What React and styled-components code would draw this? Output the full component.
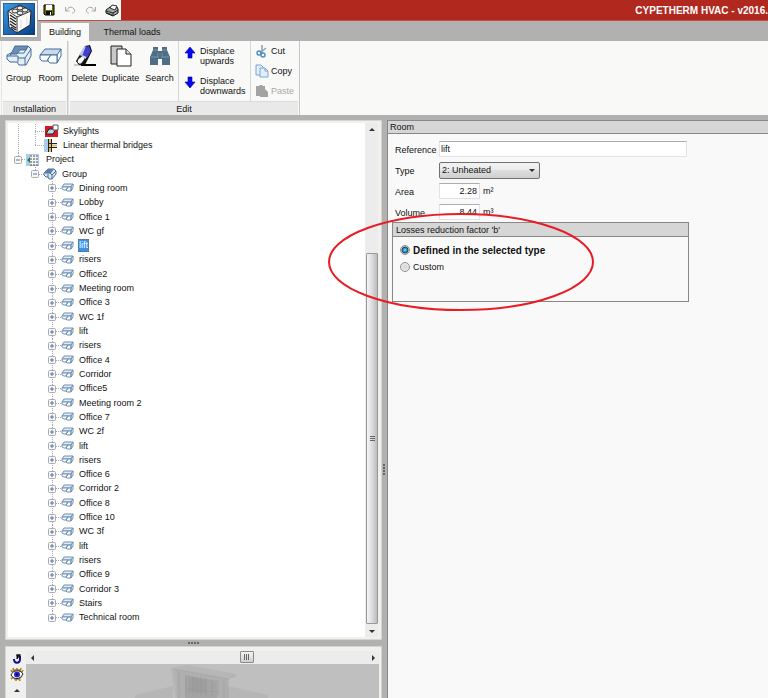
import React from "react";
import styled, { createGlobalStyle, css } from "styled-components";

const GlobalStyle = createGlobalStyle`
  *, *::before, *::after { box-sizing: border-box; }
  body { margin: 0; background: #b1b1b1; }
  body, button, input, select {
    font-family: "Liberation Sans", Arial, sans-serif;
    font-size: 9px;
    color: #111;
  }
  button { border: 0; padding: 0; margin: 0; background: none; }
  svg { display: block; flex: none; }
`;

const Window = styled.div`
  display: flex;
  flex-direction: column;
  height: 100vh;
  overflow: hidden;
`;

const Header = styled.header`
  display: grid;
  grid-template-columns: 38px 1fr;
  grid-template-rows: 21px 20px;
`;

const AppButton = styled.button`
  grid-row: 1 / 3;
  width: 38px;
  height: 38px;
  border: 1px solid #a9a9a9;
  background: #fff;
  display: grid;
  place-items: center;
`;

const TitleBar = styled.div`
  display: flex;
  justify-content: space-between;
  background: #b0281e;
  border-bottom: 1px solid #bb5049;
  overflow: hidden;
`;

const QuickAccess = styled.div`
  display: flex;
  align-items: center;
  gap: 8px;
  padding: 0 3px 0 4px;
  width: 83px;
  background: #f9f9f8;
`;

const QuickButton = styled.button`
  width: 13px;
  height: 14px;
  display: grid;
  place-items: center;
`;

const WindowTitle = styled.h1`
  margin: 0;
  font-size: 10px;
  line-height: 21px;
  color: #fff;
  white-space: nowrap;
`;

const Tabs = styled.nav`
  display: flex;
  padding-left: 3px;
  gap: 10px;
`;

const Tab = styled.button`
  width: ${(p) => (p.$active ? 48 : 66)}px;
  margin-top: 2px;
  background: ${(p) => (p.$active ? "#f9f9f8" : "transparent")};
  line-height: 16px;
  white-space: nowrap;
`;

const Ribbon = styled.div`
  display: flex;
  height: 74px;
  flex: none;
  background: #f9f9f8;
  padding-left: 1px;
`;

const RibbonGroup = styled.section`
  display: flex;
  flex-direction: column;
  width: ${(p) => p.$width}px;
  border-right: 1px solid #c8c8c8;
  border-left: 1px solid #e4e4e4;
`;

const GroupBody = styled.div`
  flex: 1;
  display: flex;
`;

const GroupTitle = styled.h2`
  margin: 0 1px;
  height: 14px;
  border-top: 1px solid #dcdcdc;
  background: #e9e9e9;
  font-size: 9px;
  font-weight: normal;
  line-height: 14px;
  text-align: center;
`;

const LargeButton = styled.button`
  width: ${(p) => p.$width}px;
  display: flex;
  flex-direction: column;
  align-items: center;
  padding-top: 3px;
  gap: 4px;
  white-space: nowrap;
  line-height: 12px;
`;

const SmallColumn = styled.div`
  display: flex;
  flex-direction: column;
  border-left: 1px solid #d6d6d6;
  width: ${(p) => p.$width}px;
  padding: ${(p) => (p.$tall ? "5px 0 0 5px" : "0 0 0 4px")};
  gap: ${(p) => (p.$tall ? 10 : 0)}px;
`;

const SmallButton = styled.button`
  display: flex;
  align-items: ${(p) => (p.$tall ? "flex-start" : "center")};
  gap: ${(p) => (p.$tall ? 4 : 2)}px;
  height: 20px;
  line-height: 10px;
  text-align: left;
  color: #111;
  white-space: nowrap;
  &:disabled { color: #aaa; }
`;

const Workspace = styled.main`
  flex: 1;
  min-height: 0;
  display: grid;
  grid-template-columns: minmax(0, 377fr) 5px minmax(0, 381fr);
  padding: 5px 0 0 5px;
`;

const LeftSide = styled.div`
  display: flex;
  flex-direction: column;
  min-height: 0;
`;

const Panel = styled.section`
  display: flex;
  background: #f0f0f0;
  border: 1px solid #d8d4c8;
  min-height: 0;
`;

const TreePanel = styled(Panel)`
  flex: 1;
  padding: 2px 3px 2px 2px;
`;

const Tree = styled.ul`
  flex: 1;
  display: flex;
  flex-direction: column;
  margin: 0;
  padding: 1px 0 12px 0;
  list-style: none;
  background: #fff;
  min-height: 0;
`;

const guides = {
  outer: css`
    background-image: repeating-linear-gradient(to bottom, #aaa 0 1px, transparent 1px 2px),
      repeating-linear-gradient(to bottom, #aaa 0 1px, transparent 1px 2px),
      repeating-linear-gradient(to right, #aaa 0 1px, transparent 1px 2px);
    background-size: 1px 100%, 1px ${(p) => (p.$last ? "50%" : "100%")}, 9px 1px;
    background-position: 10px 0, 27px 0, 27px 50%;
    background-repeat: no-repeat;
  `,
  root: css`
    background-image: repeating-linear-gradient(to bottom, #aaa 0 1px, transparent 1px 2px),
      repeating-linear-gradient(to right, #aaa 0 1px, transparent 1px 2px);
    background-size: 1px 50%, 9px 1px;
    background-position: 10px 0, 10px 50%;
    background-repeat: no-repeat;
  `,
  group: css`
    background-image: repeating-linear-gradient(to bottom, #aaa 0 1px, transparent 1px 2px),
      repeating-linear-gradient(to right, #aaa 0 1px, transparent 1px 2px);
    background-size: 1px 50%, 9px 1px;
    background-position: 27px 0, 27px 50%;
    background-repeat: no-repeat;
  `,
  room: css`
    background-image: repeating-linear-gradient(to bottom, #aaa 0 1px, transparent 1px 2px),
      repeating-linear-gradient(to right, #aaa 0 1px, transparent 1px 2px);
    background-size: 1px ${(p) => (p.$last ? "50%" : "100%")}, 11px 1px;
    background-position: 44px 0, 44px 50%;
    background-repeat: no-repeat;
  `,
};

const indents = { outer: 36, root: 6, group: 23, room: 40 };

const TreeRow = styled.li`
  flex: 1 1 0;
  min-height: 0;
  display: flex;
  align-items: center;
  padding-left: ${(p) => indents[p.$level]}px;
  ${(p) => guides[p.$level]}
`;

const Expander = styled.button`
  width: 8px;
  height: 8px;
  margin-right: ${(p) => (p.$wide ? 5 : 4)}px;
`;

const NodeLabel = styled.span`
  margin-left: ${(p) => p.$gap}px;
  line-height: 13px;
  white-space: nowrap;
  ${(p) =>
    p.$selected &&
    css`
      background: #3195f5;
      color: #fff;
      outline: 1px dotted #9a5a1a;
      outline-offset: -1px;
      padding: 0 1px;
      margin-left: ${p.$gap - 1}px;
    `}
`;

const VScroll = styled.div`
  width: 13px;
  display: flex;
  flex-direction: column;
  align-items: center;
  background: #ececec;
`;

const ScrollArrow = styled.button`
  width: 13px;
  height: 13px;
  flex: none;
  display: grid;
  place-items: center;
`;

const VTrack = styled.div`
  flex: 1;
  width: 12px;
  display: flex;
  align-items: flex-end;
`;

const VThumb = styled.div`
  width: 12px;
  height: 76%;
  border: 1px solid #999;
  border-radius: 1px;
  background: linear-gradient(to right, #f4f4f4, #dcdcdc 50%, #b9bbbf);
  display: grid;
  place-items: center;
`;

const HSplitter = styled.div`
  height: 6px;
  display: grid;
  place-items: center;
`;

const VSplitter = styled.div`
  display: grid;
  place-items: center;
  padding-top: 122px;
`;

const ViewPanel = styled(Panel)`
  height: 52px;
  border-bottom: 0;
  padding: 4px 2px 0;
`;

const ViewTools = styled.div`
  width: 18px;
  display: flex;
  flex-direction: column;
  align-items: center;
  gap: 3px;
  padding-top: 1px;
`;

const ToolButton = styled.button`
  height: 13px;
  display: grid;
  place-items: center;
`;

const ViewArea = styled.div`
  flex: 1;
  min-width: 0;
  display: flex;
  flex-direction: column;
`;

const HScroll = styled.div`
  height: 13px;
  display: flex;
  background: #ececec;
`;

const HTrack = styled.div`
  flex: 1;
  display: flex;
  padding-left: 57%;
`;

const HThumb = styled.div`
  width: 14px;
  height: 12px;
  border: 1px solid #8b8b8b;
  border-radius: 1px;
  background: linear-gradient(#f4f4f4, #cfcfcf);
  display: grid;
  place-items: center;
`;

const Viewport = styled.div`
  flex: 1;
  background: #bfbfbf;
  display: flex;
  justify-content: center;
  overflow: hidden;
`;

const RoomPanel = styled.section`
  border-left: 1px solid #888;
  background: #f9f9f9;
`;

const PanelHeading = styled.h2`
  margin: 0;
  height: 14px;
  padding-left: 2px;
  border: solid #888;
  border-width: 1px 0;
  background: #d6d6d6;
  font-size: 9px;
  font-weight: normal;
  line-height: 13px;
`;

const RoomForm = styled.form`
  padding: 7px 5px 0 4px;
`;

const Fields = styled.div`
  display: grid;
  grid-template-columns: 44px 1fr;
  row-gap: 5px;
  padding-left: 3px;
  width: 295px;
  max-width: 100%;
`;

const FieldLabel = styled.label`
  line-height: 16px;
  padding-top: 1px;
  height: 16px;
`;

const FieldValue = styled.div`
  display: flex;
  align-items: center;
  gap: 3px;
  height: 16px;
`;

const TextInput = styled.input`
  width: ${(p) => p.$width};
  height: 16px;
  border: 1px solid #e2e3ea;
  border-top-color: #abadb3;
  background: #fff;
  padding: 0 2px 0 1px;
  text-align: ${(p) => p.$align || "left"};
`;

const SelectFrame = styled.div`
  display: flex;
  align-items: center;
  width: 101px;
  height: 17px;
  border: 1px solid #707070;
  border-radius: 2px;
  background: linear-gradient(#f2f2f2, #ebebeb 50%, #dddddd 50%, #cfcfcf);
  padding-right: 3px;
`;

const Select = styled.select`
  appearance: none;
  flex: 1;
  min-width: 0;
  border: 0;
  background: none;
  padding: 0 2px;
`;

const Losses = styled.fieldset`
  position: relative;
  width: 297px;
  max-width: 100%;
  height: 80px;
  margin: 2px 0 0;
  padding: 0;
  border: 1px solid #888;
  min-width: 0;
`;

const LossesTitle = styled.div`
  height: 14px;
  padding-left: 3px;
  border-bottom: 1px solid #888;
  background: #d6d6d6;
  line-height: 14px;
`;

const Options = styled.div`
  display: flex;
  flex-direction: column;
  gap: 5px;
  padding: 7px 0 0 7px;
`;

const Option = styled.label`
  display: flex;
  align-items: center;
  gap: 3px;
  height: 12px;
  font-size: ${(p) => (p.$strong ? 10 : 9)}px;
  font-weight: ${(p) => (p.$strong ? "bold" : "normal")};
`;

const Radio = styled.input`
  appearance: none;
  width: 10px;
  height: 10px;
  margin: 0;
  border: 1px solid #8f8f8f;
  border-radius: 50%;
  background: radial-gradient(circle, #dcdcdc 30%, #f4f4f4);
  &:checked {
    background: radial-gradient(circle, #5cc0e8 0 1px, #12476b 3px, #e8f0f4 4px);
  }
`;

const Highlight = styled.svg`
  position: absolute;
  left: -66px;
  top: -11px;
  z-index: 2;
  pointer-events: none;
`;

const AppLogo = () => (
  <svg width="32" height="32" viewBox="0 0 32 32">
    <defs>
      <linearGradient id="logoBlue" x2="1" y2="1">
        <stop stopColor="#3b9de9" />
        <stop offset="1" stopColor="#073a80" />
      </linearGradient>
    </defs>
    <rect width="32" height="32" fill="url(#logoBlue)" stroke="#123b66" />
    <path d="M5 8L17 2L28 8L27 22L14 30L6 24Z" fill="#fafafa" stroke="#222" />
    <path d="M5 8L14 14L28 8M14 14V30" fill="none" stroke="#333" />
    <path d="M7 12l6 4M7 15l6 4M7 18l6 4M7 21l6 4M8 24l5 3" stroke="#222" strokeWidth="1.4" />
    <ellipse cx="12" cy="8" rx="3" ry="2" fill="#eee" stroke="#333" />
    <ellipse cx="17" cy="5" rx="3" ry="2" fill="#eee" stroke="#333" />
    <ellipse cx="17" cy="10" rx="3" ry="2" fill="#eee" stroke="#333" />
    <ellipse cx="22" cy="7" rx="3" ry="2" fill="#eee" stroke="#333" />
    <path d="M18 17v8M24 14v8" stroke="#ddd" />
  </svg>
);

const SaveIcon = () => (
  <svg width="12" height="12" viewBox="0 0 12 12">
    <path d="M1 1h10v10H2l-1-1z" fill="#6e7308" stroke="#000" />
    <path d="M3 1h6v5H3z" fill="#fff" />
    <path d="M3 7h6v4H3z" fill="#111" />
    <path d="M7 8h1v3H7z" fill="#fff" />
  </svg>
);

const UndoIcon = ({ flip }) => (
  <svg width="12" height="10" viewBox="0 0 12 10">
    <path
      d={flip ? "M10.500 2v4H6.500M10 6C8 2 4 1 2 4S3 8 4 8" : "M1.500 2v4h4M2 6C4 2 8 1 10 4S9 8 8 8"}
      fill="none"
      stroke="#a9a9a9"
    />
  </svg>
);

const PrintIcon = () => (
  <svg width="14" height="13" viewBox="0 0 14 13">
    <path d="M1 6l4-3h7l1 2v4l-5 3-7-3z" fill="#aaa" stroke="#111" />
    <path d="M5 4l2-3 5 1-2 4z" fill="#fff" stroke="#333" />
    <path d="M1 7l7 2 5-3M8 9v3M2 9l5 2" fill="none" stroke="#222" />
    <path d="M3 7h3" stroke="#3a3" />
  </svg>
);

const RoomShape = ({ size = 24 }) => (
  <svg width={size} height={size} viewBox="0 0 24 24">
    <path d="M6 5h16l-3 6H1z" fill="#ccd9e6" stroke="#3e6c9c" />
    <path d="M1 11h11l-3 4v2H3l-2-2zM22 5v7l-4 7v-8z" fill="#fff" stroke="#3e6c9c" />
    <path d="M12 11h6v8h-7l-2-2v-2z" fill="#fff" stroke="#3e6c9c" />
  </svg>
);

const GroupShape = () => (
  <svg width="26" height="24" viewBox="0 0 26 24">
    <path d="M5 9h13l4-7 3 3v7l-5 9h-7l-2-3H4l-3-3v-4z" fill="#e5edf5" stroke="#3e6c9c" />
    <path d="M9 2h13l-2 4h-6l-3 4H5z" fill="#6e8db4" stroke="#3e6c9c" />
    <path d="M1 12h11v6M12 14h7l6-9M19 14v7M5 9l-1 3" fill="none" stroke="#3e6c9c" />
  </svg>
);

const SmallRoom = () => (
  <svg width="13" height="10" viewBox="0 0 13 10">
    <path d="M3 1h9l-2 3H1z" fill="#e2ebf4" stroke="#6d90b4" />
    <path d="M1 4v2l2 1h2l2-3zM7 4h3v4H6L5 7zM12 1v4l-2 3V4z" fill="#fff" stroke="#6d90b4" />
  </svg>
);

const SmallGroup = () => (
  <svg width="14" height="12" viewBox="0 0 14 12">
    <path d="M5 1h6l2 2v3l-4 5H6L5 9H3L1 7V5z" fill="#dbe6f0" stroke="#44709c" />
    <path d="M5 1h6L8 5H2z" fill="#5d7fa6" />
    <path d="M2 5h5l2 2v4M9 7l4-4M5 9V6" fill="none" stroke="#44709c" />
  </svg>
);

const EraserIcon = () => (
  <svg width="24" height="24" viewBox="0 0 24 24">
    <path d="M1 21h9" stroke="#999" />
    <path d="M8 21h15" stroke="#000" strokeWidth="2" />
    <path d="M12 2l5-1 2 6-7 14H6l-3-4z" fill="#111" />
    <path d="M12 3l4-1 2 5-4 7-5-3z" fill="#3f3fd0" />
    <path d="M11 3l2-1-4 10-3-1z" fill="#bbc4e8" />
    <path d="M5 15l4-3 3 3-4 5H6l-2-2z" fill="#fff" stroke="#222" />
    <path d="M9 12l4 2" stroke="#d6dbf4" strokeWidth="2" />
  </svg>
);

const DuplicateIcon = () => (
  <svg width="22" height="24" viewBox="0 0 22 24">
    <path d="M1 2h11v18H1z" fill="#c9c9c9" stroke="#222" />
    <path d="M7 5h9l5 5v12H7z" fill="#fff" stroke="#222" />
    <path d="M16 5v5h5" fill="#ddd" stroke="#222" />
  </svg>
);

const BinocularsIcon = () => (
  <svg width="22" height="24" viewBox="0 0 22 24">
    <path d="M4 3h5v4h4V3h5v3l3 7v8h-8v-6H9v6H1v-8l3-7z" fill="#4e6e88" />
    <path d="M4 6h5M13 6h5M2 13h7M13 13h7M9 9v5M13 9v5" stroke="#7892a6" />
  </svg>
);

const MoveArrow = ({ down }) => (
  <svg width="12" height="13" viewBox="0 0 12 13">
    <path
      d={down ? "M4 1h4v5h3L6 12 1 6h3z" : "M4 12h4V7h3L6 1 1 7h3z"}
      fill="#0808f0"
      stroke="#0000a0"
      strokeWidth="0.6"
    />
  </svg>
);

const CutIcon = () => (
  <svg width="14" height="14" viewBox="0 0 14 14">
    <path d="M7 1v8M11 4L5 9" stroke="#8ca5ba" strokeWidth="1.600" />
    <circle cx="4" cy="9" r="2" fill="none" stroke="#4a8dc4" strokeWidth="1.400" />
    <circle cx="8" cy="11" r="2" fill="none" stroke="#4a8dc4" strokeWidth="1.400" />
  </svg>
);

const CopyIcon = () => (
  <svg width="14" height="14" viewBox="0 0 14 14">
    <path d="M1 1h5l2 2v8H1z" fill="#e4f0fc" stroke="#7ba4d6" />
    <path d="M5 4h5l3 3v6H5z" fill="#e4f0fc" stroke="#7ba4d6" />
    <path d="M10 4v3h3" fill="none" stroke="#7ba4d6" />
  </svg>
);

const PasteIcon = () => (
  <svg width="14" height="14" viewBox="0 0 14 14">
    <path d="M1 2h3l1-1h2l1 1h2v3l3 3v5H5v-1H1z" fill="#a3a3a3" />
  </svg>
);

const ExpandGlyph = ({ open }) => (
  <svg width="8" height="8" viewBox="0 0 8 8">
    <rect x=".5" y=".5" width="7" height="7" rx="1" fill="#f8f8f8" stroke="#aaa" />
    <path d={open ? "M2 4h4" : "M2 4h4M4 2v4"} stroke="#5673a5" />
  </svg>
);

const SkylightIcon = () => (
  <svg width="15" height="14" viewBox="0 0 15 14">
    <path d="M1 2h13v11H1z" fill="#d91822" />
    <path d="M2 10l3-5h7l-3 5z" fill="#b9d5ee" stroke="#222" />
    <path d="M9 1h5v5H9z" fill="#fff" stroke="#555" />
  </svg>
);

const BridgeIcon = () => (
  <svg width="14" height="13" viewBox="0 0 14 13">
    <path d="M0 0h4v13H0z" fill="#a9cbee" />
    <path d="M6 0v13M8 6.500h5" stroke="#d9bb6a" strokeWidth="2" />
    <path d="M4.500 0v13M7.500 0v13M4 4.500h9M4 8.500h9" stroke="#222" />
  </svg>
);

const ProjectIcon = () => (
  <svg width="13" height="12" viewBox="0 0 13 12">
    <path d="M0 0h13v12H0z" fill="#a9cdf2" />
    <path d="M4 1h8v10H4z" fill="#f5f5f5" />
    <path d="M4 2h8M4 5h8M4 8h8M4 11h8" stroke="#444" strokeDasharray="2 1" />
    <path d="M1 6l3-3v6z" fill="#237b4b" />
  </svg>
);

const Triangle = ({ dir }) => {
  const paths = {
    up: "M1 5l3-3 3 3z",
    down: "M1 3h6L4 6z",
    left: "M5 1v6L2 4z",
    right: "M3 1v6l3-3z",
  };
  return (
    <svg width="8" height="8" viewBox="0 0 8 8">
      <path d={paths[dir]} fill="#333" />
    </svg>
  );
};

const ThumbGrip = ({ vertical }) => (
  <svg width="8" height="8" viewBox="0 0 8 8">
    <path d={vertical ? "M2 1.500h5M2 3.500h5M2 5.500h5" : "M1.500 1v6M3.500 1v6M5.500 1v6"} stroke="#666" />
  </svg>
);

const Grip = ({ vertical }) => (
  <svg width={vertical ? 3 : 12} height={vertical ? 12 : 3} viewBox={vertical ? "0 0 3 12" : "0 0 12 3"}>
    <path
      d={vertical ? "M1 0v12" : "M0 1h12"}
      stroke="#666"
      strokeWidth="2"
      strokeDasharray="2 1"
    />
  </svg>
);

const OrbitIcon = () => (
  <svg width="12" height="12" viewBox="0 0 12 12">
    <path d="M3 6c0 5 6 5 6 0V3" fill="none" stroke="#10108a" strokeWidth="2" />
    <path d="M5 2h5M9 2L6 6V2z" fill="#111" stroke="#111" />
  </svg>
);

const EyeIcon = () => (
  <svg width="14" height="13" viewBox="0 0 14 13">
    <path d="M2 4L1 2M4 3L3 0M7 2V0M10 3l1-3M12 4l1-2M3 9l-2 2M6 10v3M9 10l1 3M2 4l3-2h4l3 3M2 8l3 3h4l3-3" fill="none" stroke="#a67c1d" strokeWidth="1.500" />
    <path d="M1 7C3 2 10 1 13 6 10 12 4 12 1 7z" fill="#fff" stroke="#222" />
    <circle cx="7" cy="6.500" r="3" fill="#2525dc" />
    <circle cx="7" cy="6.500" r="1" fill="#000" />
  </svg>
);

const Model = () => (
  <svg width="160" height="34" viewBox="0 0 160 34">
    <path d="M12 31l38-9v12H12zM104 22l41 9v3h-41z" fill="#b4b4b4" opacity=".8" />
    <path d="M48 4l16-3 49 9v2l-8 2v20H52z" fill="#aaa" opacity=".45" />
    <path d="M52 6l54 9v19H54z" fill="#a0a0a0" opacity=".3" />
    <path d="M62 11l32 6v17H62z" fill="#8a8a8a" opacity=".3" />
    <path d="M68 13l15 3v14l-17-2z" fill="#808080" opacity=".15" />
    <path
      d="M50 5l55 10 7-3M56 8v26M63 11v22M66 12v18M70 12v21M74 13v17M78 13v20M83 14v18M89 15v17M95 16v17M101 16v18M62 25l34 3"
      fill="none"
      stroke="#929292"
      opacity=".35"
    />
  </svg>
);

const rooms = [
  "Dining room", "Lobby", "Office 1", "WC gf", "lift", "risers", "Office2",
  "Meeting room", "Office 3", "WC 1f", "lift", "risers", "Office 4", "Corridor",
  "Office5", "Meeting room 2", "Office 7", "WC 2f", "lift", "risers", "Office 6",
  "Corridor 2", "Office 8", "Office 10", "WC 3f", "lift", "risers", "Office 9",
  "Corridor 3", "Stairs", "Technical room",
];

const SELECTED_ROOM = 4;

const RoomTree = () => (
  <Tree aria-label="Building elements">
    <TreeRow $level="outer">
      <SkylightIcon />
      <NodeLabel $gap={4}>Skylights</NodeLabel>
    </TreeRow>
    <TreeRow $level="outer" $last>
      <BridgeIcon />
      <NodeLabel $gap={5}>Linear thermal bridges</NodeLabel>
    </TreeRow>
    <TreeRow $level="root">
      <Expander aria-label="Collapse Project"><ExpandGlyph open /></Expander>
      <ProjectIcon />
      <NodeLabel $gap={7}>Project</NodeLabel>
    </TreeRow>
    <TreeRow $level="group">
      <Expander aria-label="Collapse Group"><ExpandGlyph open /></Expander>
      <SmallGroup />
      <NodeLabel $gap={5}>Group</NodeLabel>
    </TreeRow>
    {rooms.map((name, i) => (
      <TreeRow key={i} $level="room" $last={i === rooms.length - 1}>
        <Expander $wide aria-label={`Expand ${name}`}><ExpandGlyph /></Expander>
        <SmallRoom />
        <NodeLabel $gap={5} $selected={i === SELECTED_ROOM}>{name}</NodeLabel>
      </TreeRow>
    ))}
  </Tree>
);

export default function App() {
  return (
    <Window>
      <GlobalStyle />
      <Header>
        <AppButton aria-label="Application menu"><AppLogo /></AppButton>
        <TitleBar>
          <QuickAccess>
            <QuickButton aria-label="Save"><SaveIcon /></QuickButton>
            <QuickButton aria-label="Undo"><UndoIcon /></QuickButton>
            <QuickButton aria-label="Redo"><UndoIcon flip /></QuickButton>
            <QuickButton aria-label="Print"><PrintIcon /></QuickButton>
          </QuickAccess>
          <WindowTitle>CYPETHERM HVAC - v2016.</WindowTitle>
        </TitleBar>
        <Tabs>
          <Tab $active>Building</Tab>
          <Tab>Thermal loads</Tab>
        </Tabs>
      </Header>

      <Ribbon>
        <RibbonGroup $width={67}>
          <GroupBody>
            <LargeButton $width={33}><GroupShape />Group</LargeButton>
            <LargeButton $width={31}><RoomShape />Room</LargeButton>
          </GroupBody>
          <GroupTitle>Installation</GroupTitle>
        </RibbonGroup>
        <RibbonGroup $width={232}>
          <GroupBody>
            <LargeButton $width={31}><EraserIcon />Delete</LargeButton>
            <LargeButton $width={41}><DuplicateIcon />Duplicate</LargeButton>
            <LargeButton $width={37}><BinocularsIcon />Search</LargeButton>
            <SmallColumn $width={72} $tall>
              <SmallButton $tall><MoveArrow /><span>Displace<br />upwards</span></SmallButton>
              <SmallButton $tall><MoveArrow down /><span>Displace<br />downwards</span></SmallButton>
            </SmallColumn>
            <SmallColumn $width={49}>
              <SmallButton><CutIcon />Cut</SmallButton>
              <SmallButton><CopyIcon />Copy</SmallButton>
              <SmallButton disabled><PasteIcon />Paste</SmallButton>
            </SmallColumn>
          </GroupBody>
          <GroupTitle>Edit</GroupTitle>
        </RibbonGroup>
      </Ribbon>

      <Workspace>
        <LeftSide>
          <TreePanel>
            <RoomTree />
            <VScroll>
              <ScrollArrow aria-label="Scroll up"><Triangle dir="up" /></ScrollArrow>
              <VTrack><VThumb><ThumbGrip vertical /></VThumb></VTrack>
              <ScrollArrow aria-label="Scroll down"><Triangle dir="down" /></ScrollArrow>
            </VScroll>
          </TreePanel>
          <HSplitter><Grip /></HSplitter>
          <ViewPanel>
            <ViewTools>
              <ToolButton aria-label="Orbit"><OrbitIcon /></ToolButton>
              <ToolButton aria-label="Visibility"><EyeIcon /></ToolButton>
              <ToolButton aria-label="Scroll view up"><Triangle dir="up" /></ToolButton>
            </ViewTools>
            <ViewArea>
              <HScroll>
                <ScrollArrow aria-label="Scroll left"><Triangle dir="left" /></ScrollArrow>
                <HTrack><HThumb><ThumbGrip /></HThumb></HTrack>
                <ScrollArrow aria-label="Scroll right"><Triangle dir="right" /></ScrollArrow>
              </HScroll>
              <Viewport><Model /></Viewport>
            </ViewArea>
          </ViewPanel>
        </LeftSide>
        <VSplitter><Grip vertical /></VSplitter>
        <RoomPanel>
          <PanelHeading>Room</PanelHeading>
          <RoomForm>
            <Fields>
              <FieldLabel htmlFor="reference">Reference</FieldLabel>
              <FieldValue><TextInput id="reference" $width="100%" defaultValue="lift" /></FieldValue>
              <FieldLabel htmlFor="type">Type</FieldLabel>
              <FieldValue>
                <SelectFrame>
                  <Select id="type" defaultValue="2">
                    <option value="2">2: Unheated</option>
                  </Select>
                  <Triangle dir="down" />
                </SelectFrame>
              </FieldValue>
              <FieldLabel htmlFor="area">Area</FieldLabel>
              <FieldValue>
                <TextInput id="area" $width="41px" $align="right" defaultValue="2.28" />m²
              </FieldValue>
              <FieldLabel htmlFor="volume">Volume</FieldLabel>
              <FieldValue>
                <TextInput id="volume" $width="41px" $align="right" defaultValue="8.44" />m³
              </FieldValue>
            </Fields>
            <Losses aria-labelledby="losses-title">
              <LossesTitle id="losses-title">Losses reduction factor 'b'</LossesTitle>
              <Options>
                <Option $strong>
                  <Radio type="radio" name="factor" defaultChecked />
                  Defined in the selected type
                </Option>
                <Option>
                  <Radio type="radio" name="factor" />
                  Custom
                </Option>
              </Options>
              <Highlight width="268" height="100" viewBox="0 0 268 100">
                <ellipse cx="134" cy="50" rx="132" ry="48" fill="none" stroke="#e81c24" strokeWidth="2" />
              </Highlight>
            </Losses>
          </RoomForm>
        </RoomPanel>
      </Workspace>
    </Window>
  );
}
